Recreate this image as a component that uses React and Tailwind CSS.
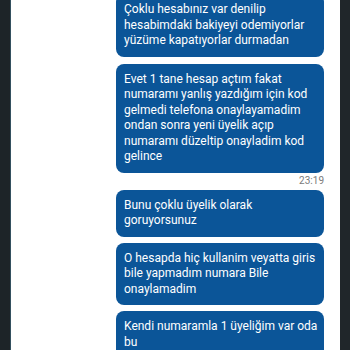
export default function App() {
  const bubble =
    'w-[208px] rounded-lg bg-[#0b5598] pl-2 pr-[6px] py-2 text-[12px] leading-[15.5px] text-white'

  return (
    <div className="flex h-[350px] w-[350px] overflow-hidden bg-[#1d2428] font-['Roboto',sans-serif]">
      <div className="w-[10px] shrink-0 bg-[#1d2428]" />
      <div className="w-px shrink-0 bg-[#34505f]" />
      <div className="flex w-[329px] shrink-0 flex-col items-end overflow-hidden bg-white pr-[16px]">
        <div className={bubble + ' mt-[-6px]'}>
          Çoklu hesabınız var denilip hesabimdaki bakiyeyi odemiyorlar yüzüme kapatıyorlar durmadan
        </div>
        <div className={bubble + ' mt-[7px]'}>
          Evet 1 tane hesap açtım fakat numaramı yanlış yazdığım için kod gelmedi telefona onaylayamadim
          ondan sonra yeni üyelik açıp numaramı düzeltip onayladim kod gelince
        </div>
        <div className="mt-[2px] text-[10px] leading-[12px] text-[#7a7a7a]">23:19</div>
        <div className={bubble + ' mt-[3px]'}>Bunu çoklu üyelik olarak goruyorsunuz</div>
        <div className={bubble + ' mt-[6px]'}>
          O hesapda hiç kullanim veyatta giris bile yapmadım numara Bile onaylamadim
        </div>
        <div className={bubble + ' mt-[6px]'}>Kendi numaramla 1 üyeliğim var oda bu</div>
      </div>
      <div className="flex-1 bg-[#20262a]" />
    </div>
  )
}
